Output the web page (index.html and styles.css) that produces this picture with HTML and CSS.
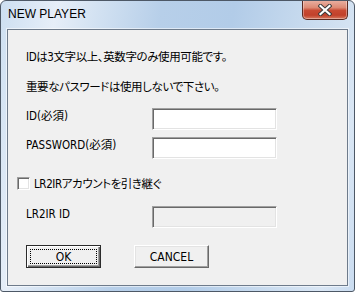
FILE: index.html
```html
<!DOCTYPE html>
<html lang="ja">
<head>
<meta charset="utf-8">
<title>NEW PLAYER</title>
<link rel="stylesheet" href="styles.css">
</head>
<body>
<div class="window">
  <div class="titlebar">
    <span class="title">NEW PLAYER</span>
    <button class="close" aria-label="閉じる">
      <svg width="14" height="12" viewBox="0 0 14 12">
        <path d="M2.5 2 L11.5 10 M11.5 2 L2.5 10" stroke="#3c3c3c" stroke-width="4.2" stroke-linecap="square" fill="none"/>
        <path d="M2.5 2 L11.5 10 M11.5 2 L2.5 10" stroke="#ffffff" stroke-width="2.2" stroke-linecap="square" fill="none"/>
      </svg>
    </button>
  </div>
  <div class="client">
    <p class="msg msg1">IDは3文字以上、英数字のみ使用可能です。</p>
    <p class="msg msg2">重要なパスワードは使用しないで下さい。</p>
    <div class="row row-id">
      <label class="lbl">ID(必須)</label>
      <span class="field"></span>
    </div>
    <div class="row row-pw">
      <label class="lbl">PASSWORD(必須)</label>
      <span class="field"></span>
    </div>
    <div class="check-row">
      <span class="checkbox"></span>
      <span class="check-lbl">LR2IRアカウントを引き継ぐ</span>
    </div>
    <div class="row row-ir">
      <label class="lbl">LR2IR ID</label>
      <span class="field disabled"></span>
    </div>
    <div class="buttons">
      <button class="btn default">OK</button>
      <button class="btn">CANCEL</button>
    </div>
  </div>
</div>
</body>
</html>
```
FILE: styles.css
```css
html, body {
  margin: 0;
  padding: 0;
  background: #ffffff;
}
body {
  font-family: "Liberation Sans Narrow", "DejaVu Sans Condensed", "Noto Sans CJK JP", sans-serif;
  font-feature-settings: "palt";
  font-size: 11.5px;
  color: #000;
}
.window {
  box-sizing: border-box;
  width: 355px;
  height: 292px;
  border: 1px solid #4d5866;
  border-radius: 6px 6px 3px 3px;
  background: linear-gradient(100deg, #cddff1 0%, #e6eef8 14%, #d3e2f2 24%, #b7cfe9 40%, #b2cce8 58%, #c7daee 76%, #d9e6f4 92%, #cadcf0 100%);
  display: flex;
  flex-direction: column;
  overflow: hidden;
}
.titlebar {
  height: 28px;
  display: flex;
  justify-content: space-between;
  align-items: flex-start;
  padding-left: 7px;
  padding-right: 6px;
}
.title {
  display: block;
  margin-top: 5px;
  line-height: 16px;
  font-family: "Liberation Sans", sans-serif;
  font-size: 12px;
  color: #000;
}
.close {
  margin: -1px 0 0 0;
  padding: 0;
  width: 46px;
  height: 20px;
  box-sizing: border-box;
  border: 1px solid #5b2a22;
  border-top: none;
  border-radius: 0 0 5px 5px;
  background: linear-gradient(180deg, #eab3a5 0%, #dd8a74 40%, #c84a33 55%, #c1412b 80%, #d77a60 100%);
  box-shadow: inset 0 0 0 1px rgba(255,255,255,0.35);
  display: flex;
  align-items: center;
  justify-content: center;
}
.close svg {
  display: block;
  margin-top: 1px;
}
.client {
  box-sizing: border-box;
  margin: 0 6px;
  height: 257px;
  border: 1px solid #6e7b8b;
  box-shadow: 0 0 0 1px rgba(255,255,255,0.55);
  background: #f0f0f0;
  padding: 19px 0 0 0;
}
.msg {
  margin: 0 0 0 18px;
  line-height: 16px;
  letter-spacing: -0.4px;
  white-space: nowrap;
}
.msg2 {
  margin-top: 14px;
}
.row {
  display: flex;
  align-items: flex-start;
  margin-left: 18px;
}
.row-id { margin-top: 13px; }
.row-pw { margin-top: 7px; }
.row-ir { margin-top: 16px; }
.lbl {
  width: 126px;
  line-height: 16px;
  white-space: nowrap;
}
.field {
  display: block;
  box-sizing: border-box;
  width: 125px;
  height: 22px;
  background: #ffffff;
  border: 1px solid;
  border-color: #a0a0a0 #ffffff #ffffff #a0a0a0;
  box-shadow: inset 1px 1px #696969, inset -1px -1px #e3e3e3;
}
.field.disabled {
  background: #f0f0f0;
}
.check-row {
  display: flex;
  align-items: center;
  gap: 4px;
  margin: 18px 0 0 9px;
  height: 13px;
}
.checkbox {
  display: block;
  box-sizing: border-box;
  width: 13px;
  height: 13px;
  background: #fff;
  border: 1px solid;
  border-color: #a0a0a0 #ffffff #ffffff #a0a0a0;
  box-shadow: inset 1px 1px #696969, inset -1px -1px #e3e3e3;
}
.check-lbl {
  line-height: 16px;
  letter-spacing: -0.4px;
  white-space: nowrap;
}
.buttons {
  display: flex;
  gap: 33px;
  margin: 17px 0 0 18px;
}
.btn {
  box-sizing: border-box;
  width: 75px;
  height: 23px;
  margin: 0;
  padding: 0;
  font-family: "Liberation Sans Narrow", "DejaVu Sans Condensed", "Noto Sans CJK JP", sans-serif;
  font-size: 12px;
  color: #000;
  background: #f0f0f0;
  border: 1px solid;
  border-color: #ffffff #696969 #696969 #ffffff;
  box-shadow: inset -1px -1px #a0a0a0, inset 1px 1px #e3e3e3;
}
.btn.default {
  border: 1px solid #2b2b2b;
  box-shadow: inset 1px 1px #ffffff, inset -1px -1px #696969, inset -2px -2px #a0a0a0;
  outline: 1px dotted #000;
  outline-offset: -5px;
}
```
